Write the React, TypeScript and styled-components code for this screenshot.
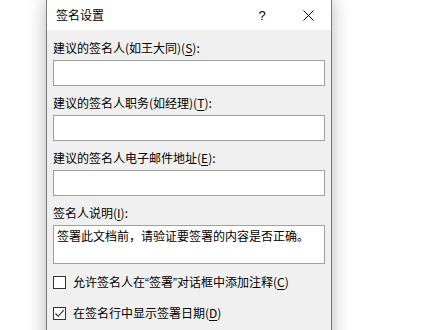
import React from "react";
import styled, { createGlobalStyle } from "styled-components";

const Global = createGlobalStyle`
  html, body { margin: 0; padding: 0; background: #ffffff; overflow: hidden; }
  body { width: 440px; height: 330px; font-family: "Noto Sans CJK SC", "Noto Sans", sans-serif; }
`;

const Page = styled.div`
  width: 440px;
  height: 330px;
  overflow: hidden;
  padding-left: 46px;
  box-sizing: border-box;
`;

const Dialog = styled.div`
  width: 286px;
  height: 360px;
  margin-top: -1px;
  box-sizing: border-box;
  border: 1px solid #7a7a7a;
  background: #f0f0f0;
  box-shadow: 0 0 18px rgba(0, 0, 0, 0.28);
  display: flex;
  flex-direction: column;
`;

const TitleBar = styled.div`
  height: 30px;
  background: #ffffff;
  display: flex;
  align-items: center;
  padding-left: 9px;
  font-size: 12px;
  color: #000;
`;

const Title = styled.div`
  flex: 1;
  line-height: 16px;
`;

const TitleButton = styled.div<{ $w: number }>`
  width: ${(p) => p.$w}px;
  height: 30px;
  display: flex;
  align-items: center;
  justify-content: center;
  font-size: 13px;
  font-family: "Liberation Sans", sans-serif;
`;

const Body = styled.div<{ $top: number }>`
  display: flex;
  flex-direction: column;
  padding: ${(p) => p.$top}px 6px 0 6px;
  gap: 9px;
`;

const Field = styled.div`
  display: flex;
  flex-direction: column;
  gap: 4px;
`;

const Label = styled.div`
  font-size: 12px;
  line-height: 16px;
  color: #000;
  white-space: nowrap;
`;

const U = styled.span`
  text-decoration: underline;
  text-underline-offset: 2px;
`;

const Quote = styled.span`
  font-family: "Liberation Sans", sans-serif;
`;

const Input = styled.div<{ $h: number }>`
  height: ${(p) => p.$h}px;
  box-sizing: border-box;
  border: 1px solid #a0a0a0;
  background: #ffffff;
  font-size: 12px;
  line-height: 16px;
  padding: 2px 3px;
  color: #000;
  white-space: nowrap;
`;

const Checks = styled.div`
  display: flex;
  flex-direction: column;
  padding-top: 10px;
  gap: 14px;
`;

const CheckRow = styled.div`
  display: flex;
  align-items: center;
  gap: 7px;
  font-size: 12px;
  line-height: 16px;
  white-space: nowrap;
`;

const Box = styled.div`
  width: 13px;
  height: 13px;
  box-sizing: border-box;
  border: 1px solid #333333;
  background: #ffffff;
  display: flex;
  align-items: center;
  justify-content: center;
`;

export default function App() {
  return (
    <>
      <Global />
      <Page>
        <Dialog>
          <TitleBar>
            <Title>签名设置</Title>
            <TitleButton $w={46}>?</TitleButton>
            <TitleButton $w={46}>
              <svg width="11" height="11" viewBox="0 0 11 11">
                <path d="M0.5 0.5 L10.5 10.5 M10.5 0.5 L0.5 10.5" stroke="#000" strokeWidth="1" fill="none" />
              </svg>
            </TitleButton>
          </TitleBar>
          <Body $top={10}>
            <Field>
              <Label>
                建议的签名人(如王大同)(<U>S</U>):
              </Label>
              <Input $h={26} />
            </Field>
            <Field>
              <Label>
                建议的签名人职务(如经理)(<U>T</U>):
              </Label>
              <Input $h={26} />
            </Field>
            <Field>
              <Label>
                建议的签名人电子邮件地址(<U>E</U>):
              </Label>
              <Input $h={26} />
            </Field>
            <Field>
              <Label>
                签名人说明(<U>I</U>):
              </Label>
              <Input $h={39}>签署此文档前，请验证要签署的内容是否正确。</Input>
            </Field>
          </Body>
          <Body $top={0}>
            <Checks>
              <CheckRow>
                <Box />
                <span>
                  允许签名人在<Quote>“</Quote>签署<Quote>”</Quote>对话框中添加注释(<U>C</U>)
                </span>
              </CheckRow>
              <CheckRow>
                <Box>
                  <svg width="11" height="11" viewBox="0 0 11 11">
                    <path d="M1.5 5.5 L4.2 8.3 L9.8 2.2" stroke="#222" strokeWidth="1.1" fill="none" />
                  </svg>
                </Box>
                <span>
                  在签名行中显示签署日期(<U>D</U>)
                </span>
              </CheckRow>
            </Checks>
          </Body>
        </Dialog>
      </Page>
    </>
  );
}
